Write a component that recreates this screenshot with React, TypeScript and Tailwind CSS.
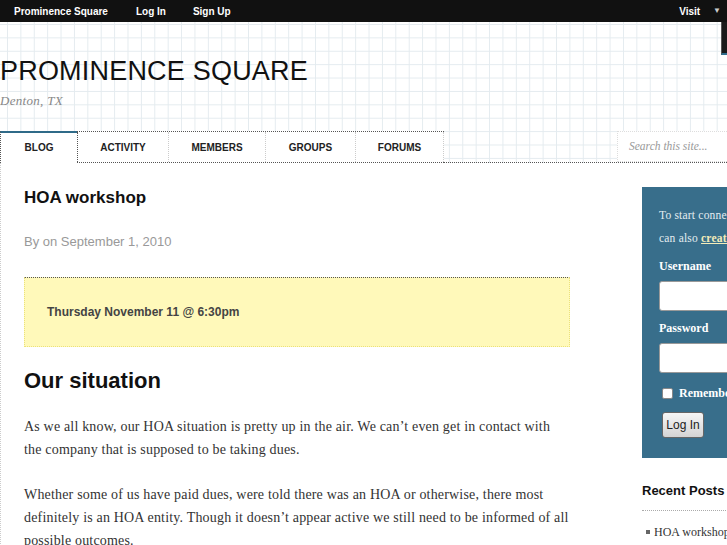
import React from "react";

const sans = { fontFamily: '"Liberation Sans", Arial, sans-serif' };

export default function App() {
  return (
    <div className="w-full min-h-[545px] overflow-hidden bg-white relative font-['Liberation_Sans',Arial,sans-serif] text-[#222]">
      {/* Top admin bar */}
      <div className="h-[22px] bg-[#111] flex items-center text-white text-[10px] font-bold">
        <span className="ml-[14px]">Prominence Square</span>
        <span className="ml-[28px]">Log In</span>
        <span className="ml-[27px]">Sign Up</span>
        <span className="ml-auto">Visit</span>
        <span className="ml-[13px] mr-[6px] text-[8px] text-[#ccc]">▼</span>
      </div>
      {/* dropdown stub */}
      <div className="absolute right-0 top-[22px] w-[6px] h-[33px] bg-[#1a1a1a] border-b-[2px] border-[#2f6c8c] border-l border-l-[#555]"></div>

      {/* Header with grid */}
      <div className="bg-[linear-gradient(to_right,#e4ebef_1px,transparent_1px),linear-gradient(to_bottom,#e4ebef_1px,transparent_1px)] bg-[size:13.4px_13.4px] bg-[position:7px_2px]">
        <div className="h-[109px] pt-[36px]">
          <div className="text-[27px] leading-[27px] text-[#111] font-['Liberation_Sans',Arial,sans-serif] tracking-[0.2px]">PROMINENCE SQUARE</div>
          <div className="mt-[8px] text-[13px] leading-[16px] italic text-[#888] tracking-[0.3px] font-['Liberation_Serif','Times_New_Roman',serif]">Denton, TX</div>
        </div>
        {/* Tabs */}
        <div className="h-[32px] flex items-stretch">
          <div className="w-[77px] bg-white border-t-[2px] border-t-[#2f6a88] border-l border-l-[#555] flex items-center justify-center text-[10px] font-bold text-[#222] pb-[2px]" style={{ borderLeftStyle: "dotted", borderTopStyle: "solid" }}>
            BLOG
          </div>
          <div className="flex bg-white border-t border-b border-[#555] border-dotted">
            <div className="w-[91px] flex items-center justify-center text-[10px] font-bold border-l border-dotted border-l-[#555]">ACTIVITY</div>
            <div className="w-[97px] flex items-center justify-center text-[10px] font-bold border-l border-dotted border-l-[#ccc]">MEMBERS</div>
            <div className="w-[90px] flex items-center justify-center text-[10px] font-bold border-l border-dotted border-l-[#ccc]">GROUPS</div>
            <div className="w-[89px] flex items-center justify-center text-[10px] font-bold border-l border-r border-dotted border-l-[#ccc] border-r-[#ccc]">FORUMS</div>
          </div>
          <div className="flex-1 border-b border-dotted border-[#555] flex justify-end">
            <div className="w-[110px] h-[31px] bg-white border border-dotted border-[#ddd] border-r-0 flex items-center pl-[11px] text-[11.5px] italic text-[#999] font-['Liberation_Serif','Times_New_Roman',serif]">
              Search this site...
            </div>
          </div>
        </div>
      </div>

      {/* Content */}
      <div className="flex border-l border-dotted border-[#ccc] min-h-[382px]">
        <div className="w-[569px] shrink-0 pl-[23px] pt-[24px]">
          <h1 className="text-[17px] leading-[22px] font-bold text-[#111]">HOA workshop</h1>
          <div className="mt-[24px] text-[13px] leading-[18px] text-[#999]">By on September 1, 2010</div>
          <div className="mt-[26px] h-[70px] bg-[#fff9ba] border border-dotted border-[#ece27a] border-t-[#555] flex items-center pl-[22px]">
            <span className="text-[12px] font-bold text-[#444]">Thursday November 11 @ 6:30pm</span>
          </div>
          <h2 className="mt-[20px] text-[22px] leading-[28px] font-bold text-[#111]">Our situation</h2>
          <div className="mt-[20px] text-[14px] leading-[23px] text-[#333] tracking-[0.18px] font-['Liberation_Serif','Times_New_Roman',serif]">
            <p className="mb-[22px]">As we all know, our HOA situation is pretty up in the air. We can’t even get in contact with the company that is supposed to be taking dues.</p>
            <p>Whether some of us have paid dues, were told there was an HOA or otherwise, there most definitely is an HOA entity. Though it doesn’t appear active we still need to be informed of all possible outcomes.</p>
          </div>
        </div>
        <div className="ml-[72px] w-[240px] shrink-0 pt-[24px]">
          <div className="bg-[#386e8b] pl-[17px] pt-[17px] pb-[20px] font-['Liberation_Serif','Times_New_Roman',serif]">
            <div className="text-[11.5px] leading-[23px] text-[#e4edf1] tracking-[0.2px] whitespace-nowrap">
              To start connecting please log in first. You<br />
              can also <a className="underline text-[#f3ecb9] font-bold">create an account</a>.
            </div>
            <div className="mt-[7px] text-[12px] leading-[18px] font-bold text-white">Username</div>
            <div className="mt-[6px] h-[30px] w-[200px] bg-white rounded-[3px] border border-[#999]"></div>
            <div className="mt-[8px] text-[12px] leading-[18px] font-bold text-white">Password</div>
            <div className="mt-[6px] h-[30px] w-[200px] bg-white rounded-[3px] border border-[#999]"></div>
            <div className="mt-[11px] flex items-center h-[18px]">
              <span className="ml-[3px] w-[11px] h-[11px] bg-white border border-[#888] rounded-[2px]"></span>
              <span className="ml-[6px] text-[12px] font-bold text-white">Remember Me</span>
            </div>
            <div className="mt-[10px] ml-[3px] w-[42px] h-[26px] rounded-[3px] border border-[#666] bg-[linear-gradient(to_bottom,#f6f6f6,#d4d4d4)] flex items-center justify-center text-[12px] text-[#222]" style={sans}>
              Log In
            </div>
          </div>
          <div className="mt-[24px] text-[13px] leading-[18px] font-bold text-[#111] pb-[10px] border-b border-dotted border-[#aaa]">Recent Posts</div>
          <div className="mt-[12px] flex items-center text-[12px] leading-[18px] text-[#333] font-['Liberation_Serif','Times_New_Roman',serif]">
            <span className="ml-[4px] w-[4px] h-[4px] bg-[#666]"></span>
            <span className="ml-[4px]">HOA workshop</span>
          </div>
        </div>
      </div>
    </div>
  );
}
